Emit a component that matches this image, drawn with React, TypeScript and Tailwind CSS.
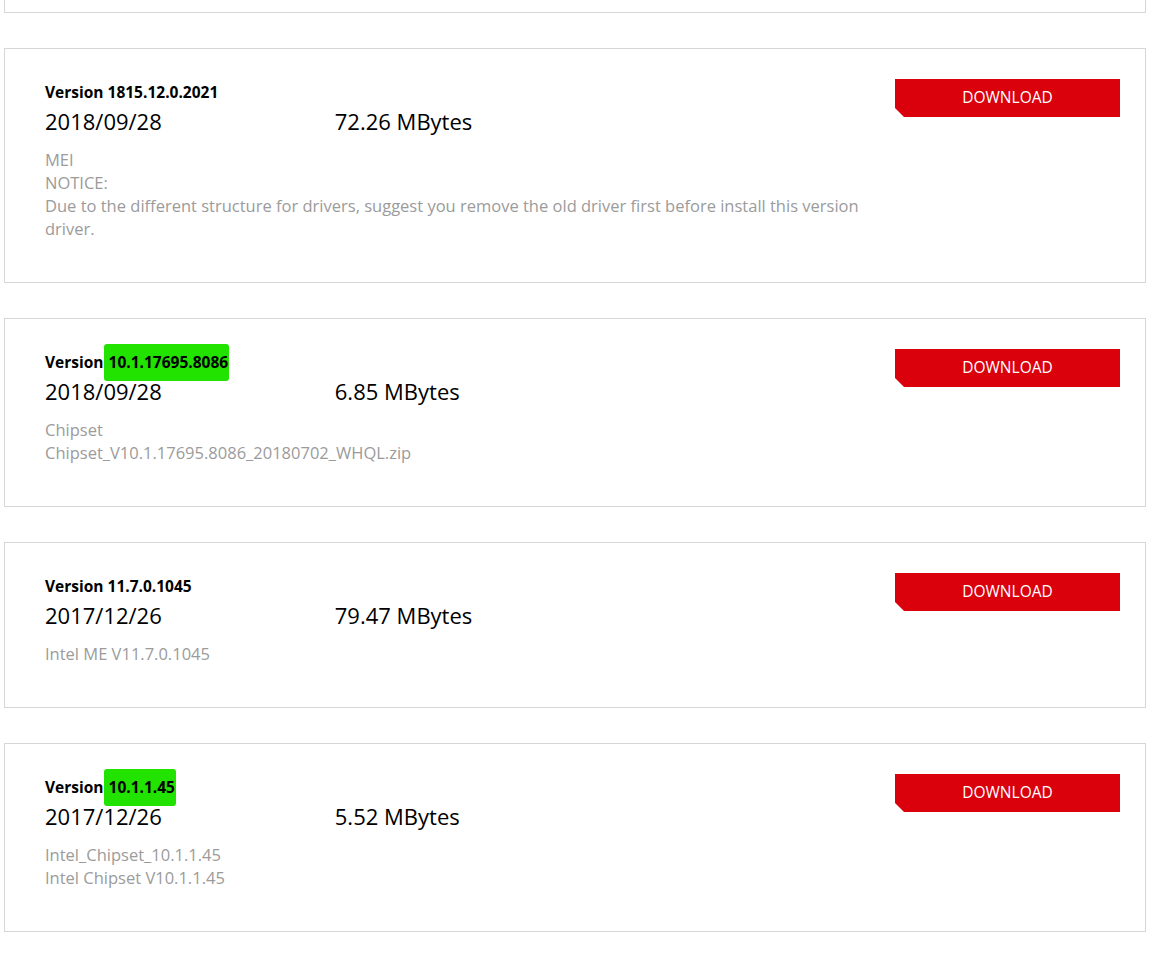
import React from "react";

interface DriverItem {
  version: string;
  highlight?: boolean;
  date: string;
  size: string;
  notes: string[];
}

const drivers: DriverItem[] = [
  {
    version: "1815.12.0.2021",
    date: "2018/09/28",
    size: "72.26 MBytes",
    notes: [
      "MEI",
      "NOTICE:",
      "Due to the different structure for drivers, suggest you remove the old driver first before install this version driver.",
    ],
  },
  {
    version: "10.1.17695.8086",
    highlight: true,
    date: "2018/09/28",
    size: "6.85 MBytes",
    notes: ["Chipset", "Chipset_V10.1.17695.8086_20180702_WHQL.zip"],
  },
  {
    version: "11.7.0.1045",
    date: "2017/12/26",
    size: "79.47 MBytes",
    notes: ["Intel ME V11.7.0.1045"],
  },
  {
    version: "10.1.1.45",
    highlight: true,
    date: "2017/12/26",
    size: "5.52 MBytes",
    notes: ["Intel_Chipset_10.1.1.45", "Intel Chipset V10.1.1.45"],
  },
];

const DriverCard: React.FC<{ item: DriverItem }> = ({ item }) => (
  <div className="flex border border-[#d6d6d6] bg-white pt-[30px] pb-[42px] pl-[40px] pr-[25px]">
    <div className="flex-1 pt-[3px]">
      <div className="text-[15.5px] leading-[20px] font-bold text-black">
        Version{" "}
        {item.highlight ? (
          <span className="ml-[-4px] bg-[#22e200] pt-[7px] pb-[8px] pl-[5px] pr-[1px] rounded-[3px]">
            {item.version}
          </span>
        ) : (
          item.version
        )}
      </div>
      <div className="mt-[4px] flex text-[22px] leading-[30px] text-black">
        <span>{item.date}</span>
        <span className="ml-[173px]">{item.size}</span>
      </div>
      <div className="mt-[12px] max-w-[825px] text-[16.5px] leading-[23px] text-[#9b9b9b]">
        {item.notes.map((n, i) => (
          <div key={i}>{n}</div>
        ))}
      </div>
    </div>
    <button className="h-[38px] w-[225px] shrink-0 bg-[#da000c] text-[15.5px] text-white [clip-path:polygon(0_0,100%_0,100%_100%,9px_100%,0_calc(100%-9px))]">
      DOWNLOAD
    </button>
  </div>
);

export default function App() {
  return (
    <div className="min-h-[968px] bg-white pl-[4px] font-['Open_Sans',sans-serif]">
      <div className="flex w-[1142px] flex-col gap-[35px]">
        <div className="h-[13px] border-x border-b border-[#d6d6d6]" />
        {drivers.map((d) => (
          <DriverCard key={d.version} item={d} />
        ))}
      </div>
    </div>
  );
}
